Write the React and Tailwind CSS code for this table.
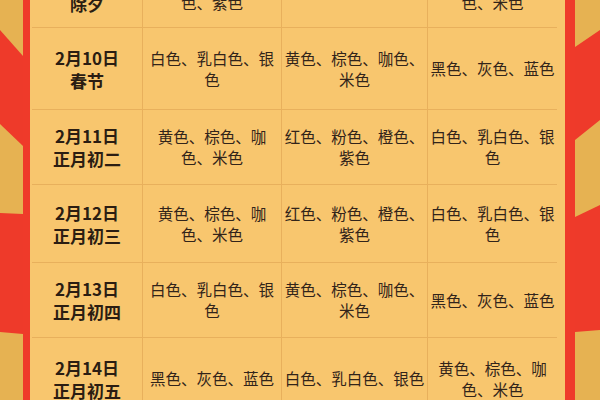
import React from "react";

// 每一行：日期、农历/节日、三个时段的颜色
const rows = [
    { date: "2月9日", name: "除夕", a: "红色、粉色、橙色、紫色", b: "黑色、灰色、蓝色", c: "黄色、棕色、咖色、米色", h: "h-[72px]" },
    { date: "2月10日", name: "春节", a: "白色、乳白色、银色", b: "黄色、棕色、咖色、米色", c: "黑色、灰色、蓝色", h: "h-[82px]" },
    { date: "2月11日", name: "正月初二", a: "黄色、棕色、咖色、米色", b: "红色、粉色、橙色、紫色", c: "白色、乳白色、银色", h: "h-[75px]" },
    { date: "2月12日", name: "正月初三", a: "黄色、棕色、咖色、米色", b: "红色、粉色、橙色、紫色", c: "白色、乳白色、银色", h: "h-[78px]" },
    { date: "2月13日", name: "正月初四", a: "白色、乳白色、银色", b: "黄色、棕色、咖色、米色", c: "黑色、灰色、蓝色", h: "h-[75px]" },
    { date: "2月14日", name: "正月初五", a: "黑色、灰色、蓝色", b: "白色、乳白色、银色", c: "黄色、棕色、咖色、米色", h: "h-[82px]" },
];

const LeftRibbon = () => (
    <svg width="23" height="400" viewBox="0 0 23 400" className="shrink-0 block">
        <rect width="23" height="400" fill="#e6b252" />
        <polygon points="0,30 23,56 23,146 0,124" fill="#ee3a2a" />
        <polygon points="0,213 23,214 23,334 0,332" fill="#ee3a2a" />
    </svg>
);

const RightRibbon = () => (
    <svg width="25" height="400" viewBox="0 0 25 400" className="shrink-0 block">
        <rect width="25" height="400" fill="#e6b252" />
        <polygon points="0,47 25,30 25,120 0,140" fill="#ee3a2a" />
        <polygon points="0,217 25,205 25,330 0,332" fill="#ee3a2a" />
    </svg>
);

const dateClasses = "text-[17px] leading-[23px] font-bold text-[#2b1d12]";
const colorClasses = "text-[15.5px] leading-[21px] text-[#32241a]";
const cellClasses = "flex flex-col items-center justify-center text-center border-r border-[#e8b05c]";

export default function App() {
    return (
        <div
            className="w-[600px] h-[400px] overflow-hidden flex bg-[#e6b252]"
            style={{ fontFamily: '"Noto Sans CJK SC", "Noto Sans", sans-serif' }}
        >
            <LeftRibbon />

            <div className="w-[552px] shrink-0 h-[400px] overflow-hidden border-l-[7px] border-r-[10px] border-[#ef3a2a] bg-[#f8c66e] pl-[2px] pr-[8px]">
                <div className="-mt-[44px]">
                    {rows.map((row) => (
                        <div
                            key={row.date}
                            className={`grid grid-cols-[111px_139px_146px_129px] border-b border-[#e8b05c] ${row.h}`}
                        >
                            <div className={`${cellClasses} ${dateClasses}`}>
                                <span>{row.date}</span>
                                <span>{row.name}</span>
                            </div>
                            <div className={`${cellClasses} ${colorClasses} px-[2px]`}>{row.a}</div>
                            <div className={`${cellClasses} ${colorClasses} px-[2px]`}>{row.b}</div>
                            <div className={`${cellClasses} ${colorClasses} border-r-0`}>{row.c}</div>
                        </div>
                    ))}
                </div>
            </div>

            <RightRibbon />
        </div>
    );
}
